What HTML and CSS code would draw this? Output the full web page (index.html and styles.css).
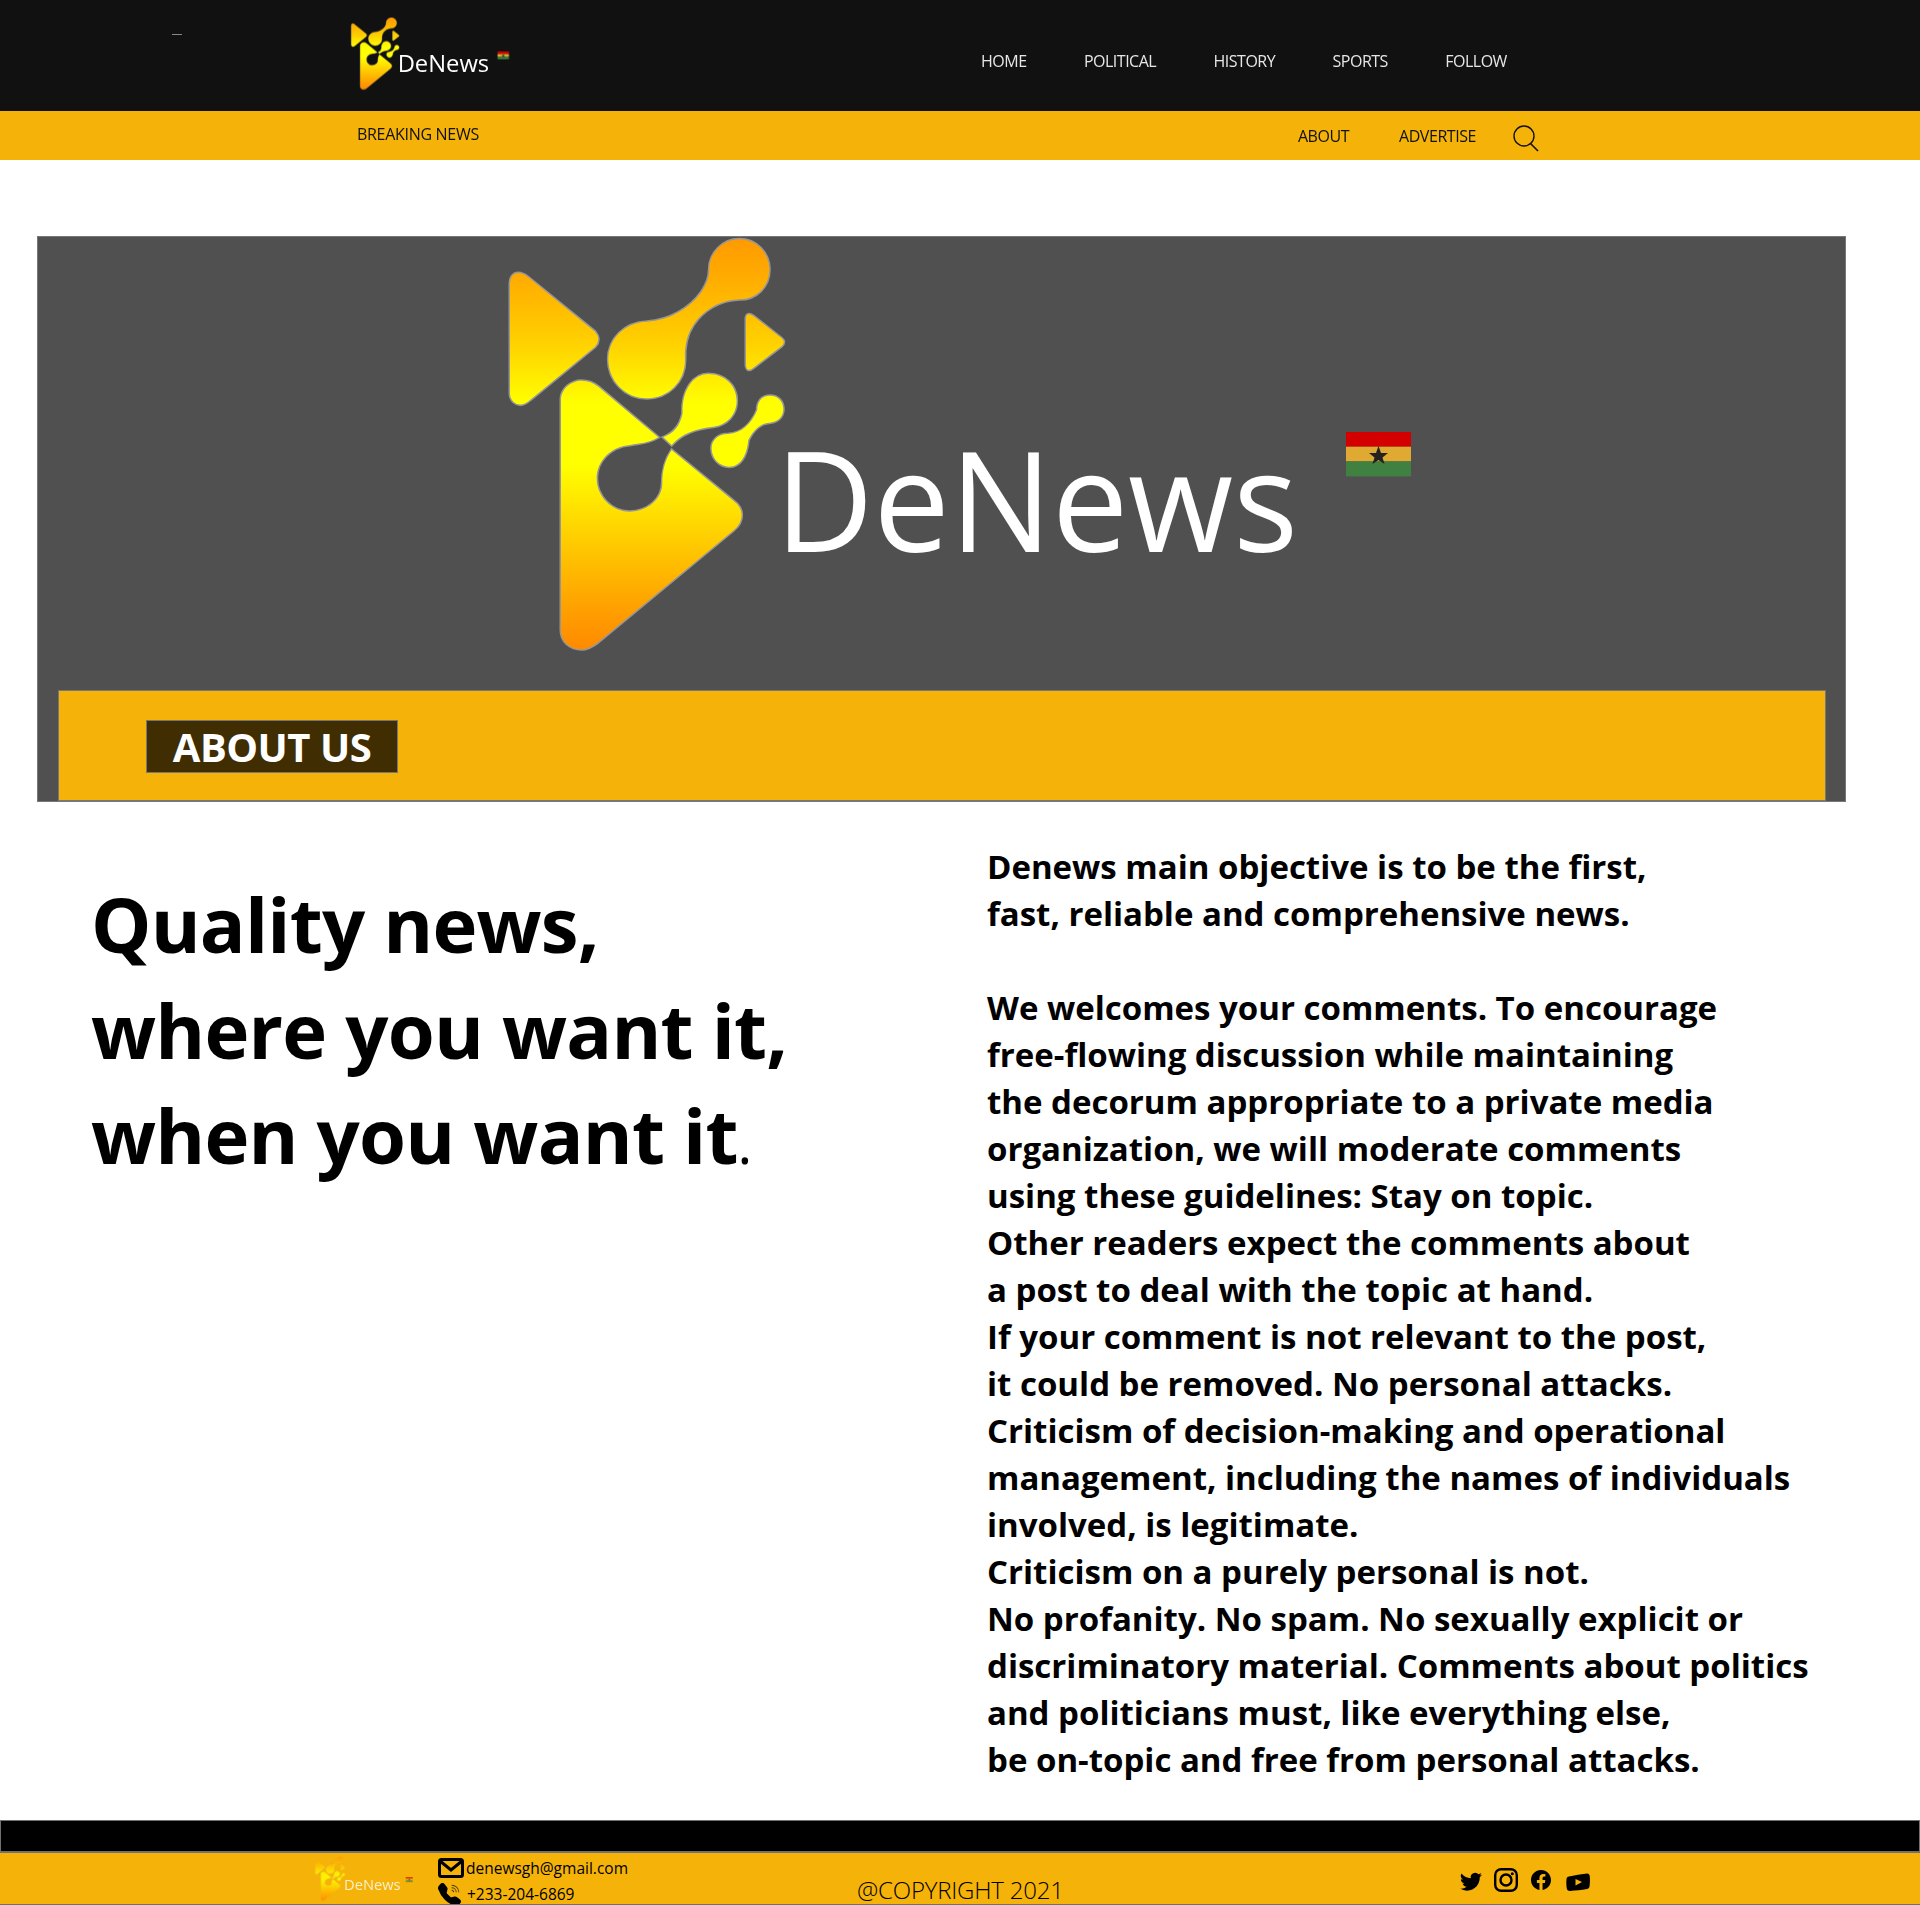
FILE: index.html
```html
<!DOCTYPE html>
<html lang="en">
<head>
<meta charset="utf-8">
<title>DeNews - About Us</title>
<link rel="stylesheet" href="styles.css">
</head>
<body>
<svg class="defs" width="0" height="0" aria-hidden="true">
  <defs>
    <linearGradient id="logoFill" gradientUnits="userSpaceOnUse" x1="0" y1="28" x2="0" y2="1258">
      <stop offset="0" stop-color="#ff9a00"/>
      <stop offset="0.1" stop-color="#ffae00"/>
      <stop offset="0.25" stop-color="#ffd000"/>
      <stop offset="0.4" stop-color="#ffff00"/>
      <stop offset="0.55" stop-color="#ffff00"/>
      <stop offset="0.72" stop-color="#ffd000"/>
      <stop offset="0.9" stop-color="#ffa000"/>
      <stop offset="1" stop-color="#ff8a00"/>
    </linearGradient>
    <filter id="soft" x="-5%" y="-5%" width="110%" height="110%">
      <feGaussianBlur stdDeviation="0.7"/>
    </filter>
    <symbol id="logo" viewBox="0 16 960 444">
      <g filter="url(#soft)">
        <g transform="translate(20 10) scale(0.3333)" fill="url(#logoFill)" stroke="#b4b4b4" stroke-opacity="0.7" stroke-width="9" paint-order="stroke">
          <path d="M30 160Q32 125 62 130Q75 133 85 142L285 305Q305 328 285 350L90 510Q62 535 40 515Q30 505 30 490Z"/>
          <path d="M718 28C770 28 808 70 808 118C808 170 770 208 718 208C660 210 610 240 580 285C562 312 553 345 555 390C555 455 505 505 440 505C375 505 325 452 325 388C325 325 375 278 440 275C510 270 570 235 605 185C622 160 628 140 628 118C628 70 668 28 718 28Z"/>
          <path d="M738 265Q740 245 760 258L845 325Q858 336 845 348L762 412Q740 430 738 405Z"/>
          <path d="M490 622C520 610 540 590 548 550C545 480 580 432 625 432C672 432 710 465 710 512C710 555 680 585 640 590C590 595 545 610 515 645Z"/>
          <path d="M810 497C835 497 850 515 850 538C850 562 830 578 808 578C780 580 760 600 745 630C740 680 720 710 688 710C658 710 635 685 635 655C635 630 655 612 685 612C725 610 755 580 772 540C772 515 785 497 810 497Z"/>
          <path d="M183 510C183 475 215 452 245 452C265 452 280 458 295 470L475 622C445 640 420 640 390 645C330 650 290 695 290 745C290 800 335 845 388 845C445 845 487 805 487 760C487 720 495 690 515 660L700 812Q725 830 725 855Q725 880 702 900L290 1240Q265 1258 245 1258C210 1258 183 1235 183 1200Z"/>
        </g>
        <g>
          <rect x="866" y="212" width="65" height="14.700" fill="#d40000"/>
          <rect x="866" y="226.700" width="65" height="14.700" fill="#e0aa30"/>
          <rect x="866" y="241.400" width="65" height="15" fill="#3f8040"/>
          <polygon points="898.500,226 901,233 908,233 902.500,237.500 904.500,244 898.500,240 892.500,244 894.500,237.500 889,233 896,233" fill="#222"/>
        </g>
      </g>
      <text class="logo-word" x="295" y="332" textLength="523" lengthAdjust="spacingAndGlyphs">DeNews</text>
    </symbol>
  </defs>
</svg>

<header class="topbar">
  <span class="dash"></span>
  <svg class="logo-small"><use href="#logo"/></svg>
  <nav class="mainnav">
    <a>HOME</a><a>POLITICAL</a><a>HISTORY</a><a>SPORTS</a><a>FOLLOW</a>
  </nav>
</header>

<div class="subbar">
  <span class="breaking">BREAKING NEWS</span>
  <nav class="subnav">
    <a class="about-link">ABOUT</a><a>ADVERTISE</a>
    <svg class="search" viewBox="0 0 26 27"><circle cx="11" cy="11" r="10" fill="none" stroke="#111" stroke-width="1.400"/><path d="M17.500 18.500L25 26" fill="none" stroke="#111" stroke-width="1.600"/></svg>
  </nav>
</div>

<section class="hero">
  <svg class="logo-big"><use href="#logo"/></svg>
  <div class="band"><h1 class="about-box">ABOUT US</h1></div>
</section>

<main class="content">
  <h2 class="headline">Quality news,<br>where you want it,<br>when you want it<span class="dot">.</span></h2>
  <p class="copy">Denews main objective is to be the first,<br>fast, reliable and comprehensive news.<br><br>We welcomes your comments. To encourage<br>free-flowing discussion while maintaining<br>the decorum appropriate to a private media<br>organization, we will moderate comments<br>using these guidelines: Stay on topic.<br>Other readers expect the comments about<br>a post to deal with the topic at hand.<br>If your comment is not relevant to the post,<br>it could be removed. No personal attacks.<br>Criticism of decision-making and operational<br>management, including the names of individuals<br>involved, is legitimate.<br>Criticism on a purely personal is not.<br>No profanity. No spam. No sexually explicit or<br>discriminatory material. Comments about politics<br>and politicians must, like everything else,<br>be on-topic and free from personal attacks.</p>
</main>

<div class="blackbar"></div>
<footer class="footer">
  <svg class="logo-foot"><use href="#logo"/></svg>
  <div class="contact">
    <div class="contact-row">
      <svg class="mail" viewBox="0 0 26 20"><rect x="1.500" y="1.500" width="23" height="17" rx="2" fill="none" stroke="#000" stroke-width="3"/><path d="M2 3L13 12L24 3" fill="none" stroke="#000" stroke-width="3"/></svg>
      <span>denewsgh@gmail.com</span>
    </div>
    <div class="contact-row">
      <svg class="phone" viewBox="0 0 16 16"><path d="M1.885.511a1.745 1.745 0 0 1 2.61.163L6.29 2.98c.329.423.445.974.315 1.494l-.547 2.19a.678.678 0 0 0 .178.643l2.457 2.457a.678.678 0 0 0 .644.178l2.189-.547a1.745 1.745 0 0 1 1.494.315l2.306 1.794c.829.645.905 1.87.163 2.611l-1.034 1.034c-.74.74-1.846 1.065-2.877.702a18.634 18.634 0 0 1-7.01-4.42 18.634 18.634 0 0 1-4.42-7.009c-.362-1.03-.037-2.137.703-2.877L1.885.511z"/><path d="M9.500 1.500a5 5 0 0 1 5 5M9.500 3.300a3.200 3.200 0 0 1 3.200 3.200M9.500 5.100a1.400 1.400 0 0 1 1.400 1.400" fill="none" stroke="#4a3a10" stroke-width="0.700"/></svg>
      <span class="phone-num">+233-204-6869</span>
    </div>
  </div>
  <div class="copyright">@COPYRIGHT 2021</div>
  <div class="social">
    <svg class="tw" viewBox="0 0 16 16"><path d="M5.026 15c6.038 0 9.341-5.003 9.341-9.334 0-.14 0-.282-.006-.422A6.685 6.685 0 0 0 16 3.542a6.658 6.658 0 0 1-1.889.518 3.301 3.301 0 0 0 1.447-1.817 6.533 6.533 0 0 1-2.087.793A3.286 3.286 0 0 0 7.875 6.03a9.325 9.325 0 0 1-6.767-3.429 3.289 3.289 0 0 0 1.018 4.382A3.323 3.323 0 0 1 .64 6.575v.045a3.288 3.288 0 0 0 2.632 3.218 3.203 3.203 0 0 1-.865.115 3.23 3.23 0 0 1-.614-.057 3.283 3.283 0 0 0 3.067 2.277A6.588 6.588 0 0 1 .78 13.58a6.32 6.32 0 0 1-.78-.045A9.344 9.344 0 0 0 5.026 15z"/></svg>
    <svg class="ig" viewBox="0 0 24 24"><rect x="1.200" y="1.200" width="21.600" height="21.600" rx="6" fill="none" stroke="#000" stroke-width="2.400"/><circle cx="12" cy="12" r="5.500" fill="none" stroke="#000" stroke-width="2.400"/><circle cx="18.300" cy="5.700" r="1.500"/></svg>
    <svg class="fb" viewBox="0 0 16 16"><path d="M16 8.049c0-4.446-3.582-8.05-8-8.05C3.58 0-.002 3.603-.002 8.05c0 4.017 2.926 7.347 6.75 7.951v-5.625h-2.03V8.05H6.75V6.275c0-2.017 1.195-3.131 3.022-3.131.876 0 1.791.157 1.791.157v1.98h-1.009c-.993 0-1.303.621-1.303 1.258v1.51h2.218l-.354 2.326H9.25V16c3.824-.604 6.75-3.934 6.75-7.951z"/></svg>
    <svg class="yt" viewBox="0 0 24 18"><path d="M3 3.500C9 2 15 1 21 .500C23 .500 23.700 2 23.800 3.500C24 7 24 10.500 23.500 13.500C23.300 15 22 15.800 21 16C15 17 10 17.500 4 18C2 18 1 16.800 .800 15.500C.300 12 .200 9 .500 6C.700 4.500 1.500 3.800 3 3.500Z"/><path d="M9.500 6L16 9L9.500 12.500Z" fill="#f5b309"/></svg>
  </div>
</footer>
</body>
</html>
```

FILE: styles.css
```css
* { box-sizing: border-box; }
html, body { margin: 0; padding: 0; }
body {
  width: 1920px;
  height: 1905px;
  overflow: hidden;
  background: #fff;
  color: #000;
  font-family: "Open Sans", "Noto Sans", "Liberation Sans", sans-serif;
}
.defs { display: block; height: 0; }
.logo-word { font-family: "Open Sans", sans-serif; font-weight: 400; font-size: 140px; fill: #fff; }

.topbar {
  height: 111px;
  background: #111;
  display: flex;
  align-items: flex-start;
}
.dash { width: 10px; height: 1px; margin: 34px 0 0 172px; background: #888; }
.logo-small { width: 168px; height: 78px; margin: 17px 0 0 164px; flex: none; }
.mainnav {
  display: flex;
  gap: 57.400px;
  margin: 50px 0 0 467px;
  color: #e6e6e6;
  font-size: 16px;
  line-height: 22px;
  letter-spacing: -0.5px;
}

.subbar {
  height: 49px;
  background: #f5b309;
  display: flex;
  align-items: flex-start;
  font-size: 16px;
  line-height: 22px;
  letter-spacing: -0.3px;
  color: #111;
}
.breaking { margin: 12px 0 0 357px; }
.subnav { display: flex; align-items: flex-start; margin: 14px 0 0 819px; letter-spacing: -0.45px; }
.about-link { margin-right: 50px; }
.search { width: 26px; height: 27px; margin: 0 0 0 37px; }

.hero {
  width: 1809px;
  height: 566px;
  margin: 76px 0 0 37px;
  background: #505050;
  border: 1px solid #777;
  display: flex;
  flex-direction: column;
  align-items: flex-start;
}
.logo-big { width: 960px; height: 444px; margin: -1px 0 0 442px; flex: none; }
.band {
  width: 1768px;
  height: 111px;
  margin: 10px 0 0 20px;
  background: #f5b309;
  border: 1px solid #777;
  padding: 29px 0 0 87px;
}
.about-box {
  width: 252px;
  height: 53px;
  margin: 0;
  background: #402d02;
  border: 1px solid #777;
  color: #fff;
  font-size: 40px;
  font-weight: 700;
  line-height: 52px;
  letter-spacing: -0.5px;
  text-align: center;
}

.content {
  height: 1018px;
  display: flex;
  align-items: flex-start;
}
.headline {
  width: 896px;
  margin: 69px 0 0 91px;
  font-size: 76px;
  font-weight: 700;
  line-height: 105.700px;
  letter-spacing: -0.8px;
}
.dot { font-size: 56px; font-weight: 400; }
.copy {
  margin: 41px 0 0 0;
  font-size: 33px;
  font-weight: 700;
  line-height: 47px;
  white-space: nowrap;
}

.blackbar { height: 31px; background: #000; border: 1px solid #707070; border-bottom: 0; }
.footer {
  height: 54px;
  background: #f5b309;
  border-top: 2px solid #707070;
  border-bottom: 1px solid #707070;
  display: flex;
  align-items: flex-start;
  overflow: hidden;
}
.logo-foot { width: 104px; height: 48px; margin: 3px 0 0 312px; opacity: 0.8; flex: none; }
.contact { margin: 2px 0 0 22px; width: 419px; flex: none; font-size: 15.500px; line-height: 24px; color: #000; }
.contact-row { display: flex; align-items: center; height: 26px; }
.mail { width: 26px; height: 20px; margin-right: 2px; }
.phone { width: 23px; height: 23px; margin-right: 6px; }
.copyright { width: 602px; flex: none; margin: 24px 0 0 0; font-size: 24px; font-weight: 300; line-height: 26px; letter-spacing: -0.2px; white-space: nowrap; }
.social { display: flex; align-items: flex-start; }
.tw { width: 24px; height: 22px; margin: 17px 0 0 0; }
.ig { width: 24px; height: 24px; margin: 15px 0 0 11px; }
.fb { width: 20px; height: 20px; margin: 17px 0 0 13px; }
.yt { width: 24px; height: 18px; margin: 20px 0 0 15px; }
```
